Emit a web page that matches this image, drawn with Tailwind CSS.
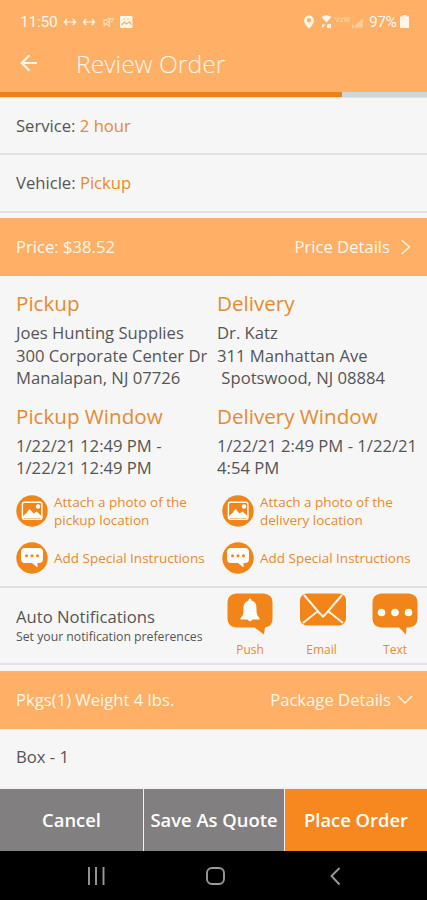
<!DOCTYPE html>
<html lang="en">
<head>
<meta charset="utf-8">
<title>Review Order</title>
<script src="https://cdn.jsdelivr.net/npm/@tailwindcss/browser@4"></script>
</head>
<body class="w-[427px] h-[900px] overflow-hidden bg-[#f6f6f6] text-[#555] font-['Open_Sans',sans-serif] text-[16.650px] leading-[22px]">
<svg class="hidden">
  <symbol id="photo" viewBox="0 0 32 32"><circle cx="16" cy="16" r="15.7" fill="#f28519"/><rect x="6.4" y="7.2" width="19.5" height="17" rx="2" fill="none" stroke="#fff" stroke-width="1.4"/><path d="M7 23v-2l3.500-3 3-4 4 4.500 3-2 5 4.500v2z" fill="#fff"/><circle cx="22" cy="11.500" r="2.2" fill="#fff"/></symbol>
  <symbol id="note" viewBox="0 0 32 32"><circle cx="16" cy="16" r="15.7" fill="#f28519"/><path d="M9 6h14q4 0 4 4v7q0 4-4 4h-1.500v4.500L16 21H9q-4 0-4-4v-7q0-4 4-4z" fill="#fff"/><g fill="#f28519"><circle cx="10.500" cy="13.700" r="1.500"/><circle cx="16" cy="13.700" r="1.500"/><circle cx="21.500" cy="13.700" r="1.500"/></g></symbol>
</svg>
<div class="h-full flex flex-col">
  <div class="h-[92px] shrink-0 bg-[#ffb066] text-[#fff6ea]">
    <div class="h-[43px] flex items-center pl-[20px] pr-[18px]">
      <span class="font-[Roboto] text-[15.500px] w-[43px] whitespace-nowrap tracking-[-0.200px]">11:50</span>
      <svg class="w-[78px] h-4" viewBox="0 0 78 16" fill="none" stroke="#fff6ea" stroke-width="1.300">
        <path d="M4 5 1.500 8 4 11M10 5l2.500 3L10 11M2 8h3.500M8.500 8H12M23 5l-2.500 3L23 11M29 5l2.500 3L29 11M21 8h3.500M27.500 8H31"/><circle cx="7" cy="8" r=".8" fill="#fff6ea" stroke="none"/><circle cx="26" cy="8" r=".8" fill="#fff6ea" stroke="none"/>
        <path d="M41 6h2.500l3-2v8l-3-2H41zM46 5h5M48 8l2-1M41 12l6-6" opacity=".6"/>
        <rect x="57" y="2" width="12.500" height="12" rx="1" fill="#fff6ea" stroke="none"/><path d="M58.500 11l3-3 2 2 3-2 2 3" stroke="#ffb066"/><circle cx="61" cy="5" r=".7" fill="#ffb066" stroke="none"/><circle cx="65" cy="5" r=".7" fill="#ffb066" stroke="none"/>
      </svg>
      <svg class="ml-auto w-[66px] h-4 shrink-0" viewBox="0 0 66 16" fill="#fff6ea">
        <path fill-rule="evenodd" d="M6 1.500a4.900 4.900 0 0 0-4.900 4.900C1.100 10 6 14.500 6 14.500S10.900 10 10.900 6.400A4.900 4.900 0 0 0 6 1.500zM6 4a2.200 2.200 0 1 1 0 4.400A2.200 2.200 0 0 1 6 4z"/>
        <path d="M18.500 3q5-3.500 10 0l-5 5.500zM19 14v-3.500h3.500zM24 10.500l4 3.500h-4zM28 10v4l-4-3.500z"/>
        <path d="M60 4v9.500H50zM49 10v4h5z" opacity=".4"/>
        <text x="32" y="8" font-size="7.500" font-family="Roboto" opacity=".55">VzW</text>
      </svg>
      <span class="font-[Roboto] text-[15.500px] w-[29px] whitespace-nowrap tracking-[-0.500px]">97%</span>
      <svg class="w-[9px] h-[13px] ml-[2px] shrink-0" viewBox="0 0 9 13" fill="#fff6ea"><path d="M2.500 0h4v1.500H9V13H0V1.500h2.500z"/></svg>
    </div>
    <div class="h-[42px] flex items-center pl-[20px]">
      <svg class="w-[18px] h-[18px] -mt-[2px]" viewBox="0 0 18 18" fill="none" stroke="#fff6ea" stroke-width="2.200"><path d="M17 9H2M9.500 1.300 1.800 9l7.700 7.700"/></svg>
      <h1 class="ml-[38px] text-[24.700px] font-light">Review Order</h1>
    </div>
  </div>
  <div class="h-[6px] shrink-0 bg-[#ffd9b2]"><div class="h-[4.500px] bg-[#cdd8dc]"><div class="h-full w-[342px] bg-[#ee801a]"></div></div></div>
  <div class="h-[57px] shrink-0 border-b-2 border-[#e0e1e3] px-4 flex items-center whitespace-pre"><span>Service: </span><span class="text-[#e98a2c]">2 hour</span></div>
  <div class="h-[58px] shrink-0 border-b-2 border-[#e0e1e3] px-4 flex items-center whitespace-pre"><span>Vehicle: </span><span class="text-[#e98a2c]">Pickup</span></div>
  <div class="h-[58px] mt-[5px] shrink-0 bg-[#ffb066] text-[#fff6ea] pl-4 pr-[16px] flex items-center"><span>Price: $38.52</span><span class="ml-auto">Price Details</span>
    <svg class="ml-[10px] w-[11px] h-4" viewBox="0 0 11 16" fill="none" stroke="#fff6ea" stroke-width="1.300"><path d="M1.500 1 9.500 8l-8 7"/></svg></div>
  <div class="h-[312px] shrink-0 border-b-2 border-[#e0e1e3] pl-4 pt-[12px] whitespace-nowrap">
    <div class="grid grid-cols-[201px_1fr]">
      <div><h2 class="text-[#e98a2c] text-[20.600px] leading-[30px]">Pickup</h2><p class="mt-[4px] leading-[22.500px]">Joes Hunting Supplies<br>300 Corporate Center Dr<br>Manalapan, NJ 07726</p></div>
      <div><h2 class="text-[#e98a2c] text-[20.600px] leading-[30px]">Delivery</h2><p class="mt-[4px] leading-[22.500px]">Dr. Katz<br>311 Manhattan Ave<br>&nbsp;Spotswood, NJ 08884</p></div>
      <div class="mt-[11px]"><h2 class="text-[#e98a2c] text-[20.600px] leading-[30px]">Pickup Window</h2><p class="mt-[4px] leading-[22.500px]">1/22/21 12:49 PM -<br>1/22/21 12:49 PM</p></div>
      <div class="mt-[11px]"><h2 class="text-[#e98a2c] text-[20.600px] leading-[30px]">Delivery Window</h2><p class="mt-[4px] leading-[22.500px]">1/22/21 2:49 PM - 1/22/21<br>4:54 PM</p></div>
    </div>
    <div class="mt-[13px] grid grid-cols-[206px_1fr] gap-y-[11.500px] text-[13.500px] leading-[18px] text-[#e98a2c]">
      <div class="h-9 flex items-center gap-[6px]"><svg class="w-8 h-8"><use href="#photo"/></svg><span>Attach a photo of the<br>pickup location</span></div>
      <div class="h-9 flex items-center gap-[6px]"><svg class="w-8 h-8"><use href="#photo"/></svg><span>Attach a photo of the<br>delivery location</span></div>
      <div class="h-9 flex items-center gap-[6px]"><svg class="w-8 h-8"><use href="#note"/></svg><span>Add Special Instructions</span></div>
      <div class="h-9 flex items-center gap-[6px]"><svg class="w-8 h-8"><use href="#note"/></svg><span>Add Special Instructions</span></div>
    </div>
  </div>
  <div class="h-[77px] shrink-0 border-b-2 border-[#e0e1e3] pl-4 flex whitespace-nowrap">
    <div class="w-[211px] pt-[18px]"><p>Auto Notifications</p><p class="text-[12.250px] leading-[17px]">Set your notification preferences</p></div>
    <div class="pt-[5px] grid grid-cols-[46px_46px_46px] gap-x-[26.500px] text-center text-[12px] text-[#e98a2c] leading-[14px]">
      <div><svg class="w-[46px] h-[42px] mb-[8px]" viewBox="0 0 46 42"><path d="M9 .5h28q8.500 1 8.500 9v16q0 8-7.500 9l-1 7-9.500-7H9q-8.500-1-8.500-9v-16q0-8 8.500-9z" fill="#f28519"/><path d="M23 5.500q1.500 0 1.500 2c4.500 1.500 5 5 5 9 0 5 1 6.500 3 8.500v1.500h-7q-2.500 3.500-5 0h-7V25c2-2 3-3.500 3-8.500 0-4 .500-7.500 5-9q0-2 1.500-2z" fill="#fff"/></svg><p>Push</p></div>
      <div><svg class="w-[46px] h-[42px] mb-[8px]" viewBox="0 0 46 42"><rect x="0" y=".5" width="46" height="32" rx="7" fill="#f28519"/><path d="M4 2l15 17.500 4 4 4-4L42 2M3 30l15-12M43 30 28 18" fill="none" stroke="#fff6ea" stroke-width="2"/></svg><p class="-ml-[2px]">Email</p></div>
      <div><svg class="w-[46px] h-[42px] mb-[8px]" viewBox="0 0 46 42"><path d="M9 .5h28q8.500 1 8.500 9v16q0 8-8.500 9h-2.500l-.5 7-7-7H9q-8.500-1-8.500-9v-16q0-8 8.500-9z" fill="#f28519"/><g fill="#fff"><circle cx="9.500" cy="19.500" r="3.800"/><circle cx="23" cy="19.500" r="3.800"/><circle cx="36.500" cy="19.500" r="3.800"/></g></svg><p>Text</p></div>
    </div>
  </div>
  <div class="h-[58px] mt-[6px] shrink-0 bg-[#ffb066] text-[#fff6ea] pl-4 pr-[14px] flex items-center"><span>Pkgs(1) Weight 4 lbs.</span><span class="ml-auto">Package Details</span>
    <svg class="ml-[6px] w-[16px] h-[10px]" viewBox="0 0 16 10" fill="none" stroke="#fff6ea" stroke-width="1.300"><path d="M1 1l7 7 7-7"/></svg></div>
  <div class="h-[58px] shrink-0 px-4 pb-[2px] flex items-center">Box - 1</div>
  <div class="h-[64px] shrink-0 pt-[2px] bg-[#f2f2f2] grid grid-cols-[143px_140px_142px] gap-x-px text-white font-semibold text-[18.400px] whitespace-nowrap">
    <div class="bg-[#827f80] flex items-center justify-center">Cancel</div>
    <div class="bg-[#827f80] flex items-center justify-center">Save As Quote</div>
    <div class="bg-[#f6881f] flex items-center justify-center">Place Order</div>
  </div>
  <div class="h-[49px] shrink-0 bg-black">
    <svg class="w-[427px] h-[49px]" viewBox="0 0 427 49" fill="none" stroke="#999" stroke-width="1.900"><path d="M89 16v18M96 16v18M103.500 16v18M339.500 17l-8 8 8 8.500"/><rect x="207" y="17" width="17" height="16" rx="5"/></svg>
  </div>
</div>
</body>
</html>
